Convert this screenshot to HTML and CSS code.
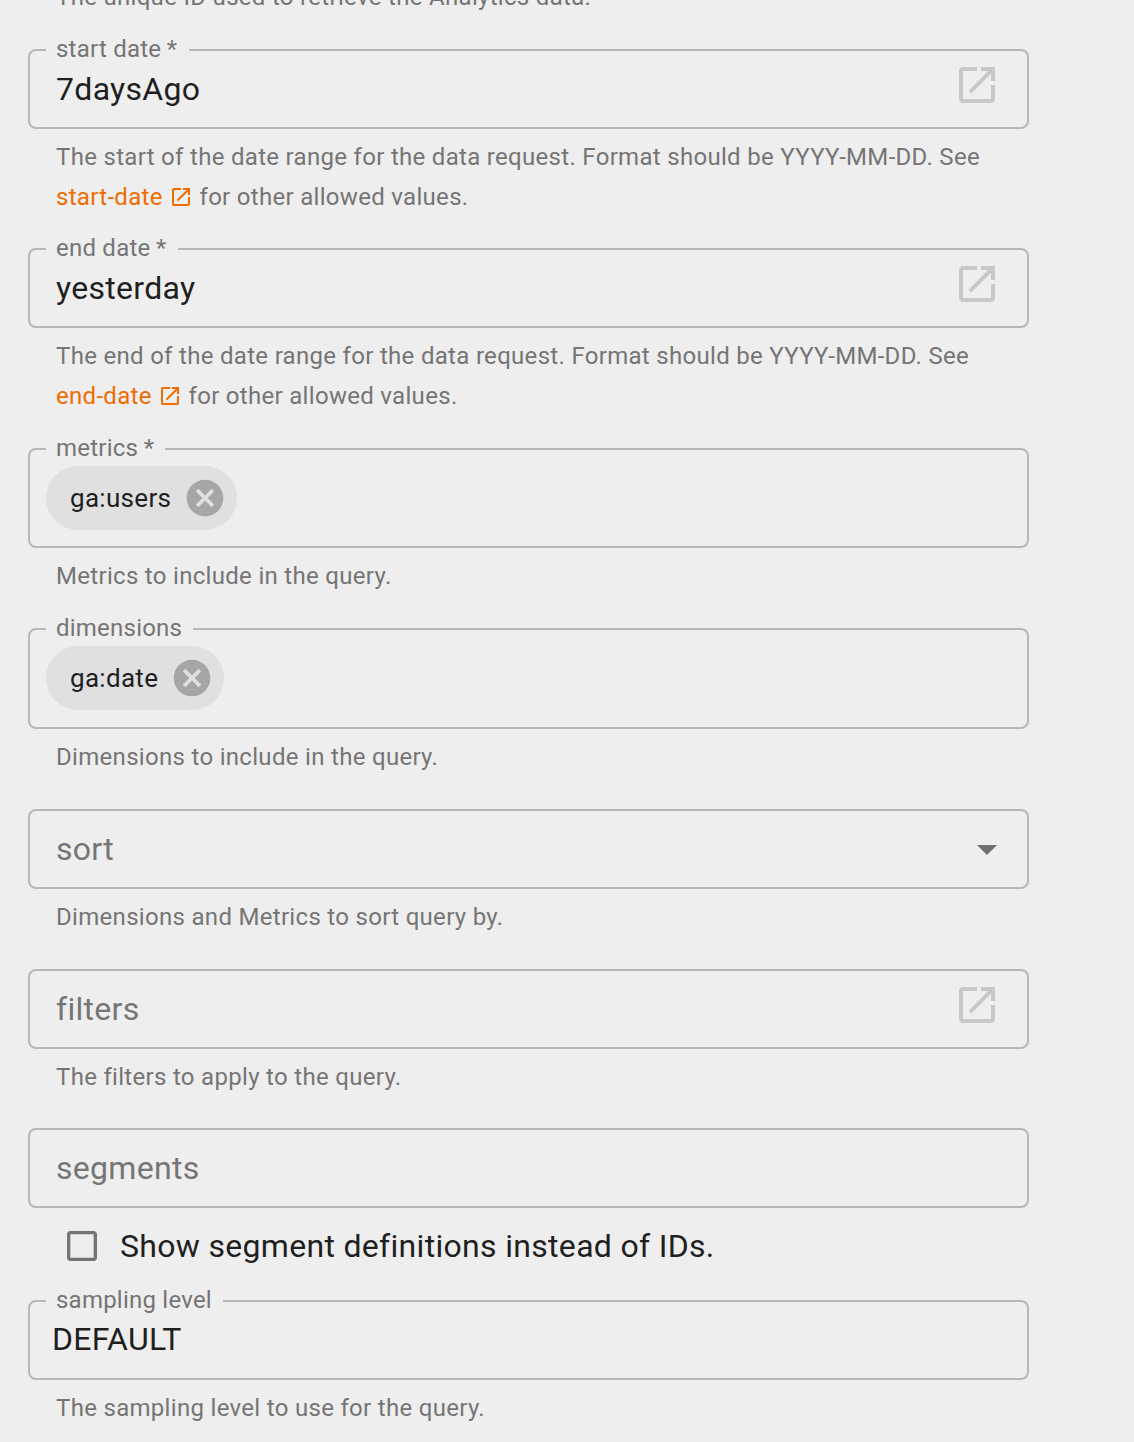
FILE: index.html
```html
<!DOCTYPE html>
<html lang="en">
<head>
<meta charset="utf-8">
<title>Query parameters</title>
<link rel="stylesheet" href="styles.css">
</head>
<body>
<svg class="sprite" aria-hidden="true">
  <symbol id="open" viewBox="0 0 24 24"><path d="M19 19H5V5h7V3H5c-1.11 0-2 .9-2 2v14c0 1.1.89 2 2 2h14c1.1 0 2-.9 2-2v-7h-2v7zM14 3v2h3.59l-9.83 9.83 1.41 1.41L19 6.41V10h2V3h-7z"/></symbol>
  <symbol id="cancel" viewBox="0 0 24 24"><path d="M12 2C6.47 2 2 6.47 2 12s4.47 10 10 10 10-4.47 10-10S17.53 2 12 2zm5 13.59L15.59 17 12 13.41 8.41 17 7 15.59 10.59 12 7 8.41 8.41 7 12 10.59 15.59 7 17 8.41 13.41 12 17 15.59z"/></symbol>
  <symbol id="arrow" viewBox="0 0 24 24"><path d="M7 10l5 5 5-5z"/></symbol>
  <symbol id="unchecked" viewBox="0 0 24 24"><path d="M19 5v14H5V5h14m0-2H5c-1.1 0-2 .9-2 2v14c0 1.1.9 2 2 2h14c1.1 0 2-.9 2-2V5c0-1.1-.9-2-2-2z"/></symbol>
</svg>
<main class="form">
  <section class="field">
    <p class="helper helper-first">The unique ID used to retrieve the Analytics data.</p>
  </section>
  <section class="field">
    <fieldset class="box">
      <legend class="label">start date<span class="star">*</span></legend>
      <div class="control"><span class="value">7daysAgo</span><svg class="open-icon"><use href="#open"/></svg></div>
    </fieldset>
    <p class="helper">The start of the date range for the data request. Format should be YYYY-MM-DD. See <a class="link">start-date<svg class="link-icon"><use href="#open"/></svg></a> for other allowed values.</p>
  </section>
  <section class="field">
    <fieldset class="box">
      <legend class="label">end date<span class="star">*</span></legend>
      <div class="control"><span class="value">yesterday</span><svg class="open-icon"><use href="#open"/></svg></div>
    </fieldset>
    <p class="helper">The end of the date range for the data request. Format should be YYYY-MM-DD. See <a class="link">end-date<svg class="link-icon"><use href="#open"/></svg></a> for other allowed values.</p>
  </section>
  <section class="field">
    <fieldset class="box box-metrics">
      <legend class="label">metrics<span class="star">*</span></legend>
      <div class="tags"><span class="chip">ga:users<svg class="chip-icon"><use href="#cancel"/></svg></span></div>
    </fieldset>
    <p class="helper">Metrics to include in the query.</p>
  </section>
  <section class="field">
    <fieldset class="box box-dimensions">
      <legend class="label">dimensions</legend>
      <div class="tags"><span class="chip">ga:date<svg class="chip-icon"><use href="#cancel"/></svg></span></div>
    </fieldset>
    <p class="helper">Dimensions to include in the query.</p>
  </section>
  <section class="field">
    <div class="box box-empty">
      <div class="control"><span class="placeholder">sort</span><svg class="arrow-icon"><use href="#arrow"/></svg></div>
    </div>
    <p class="helper">Dimensions and Metrics to sort query by.</p>
  </section>
  <section class="field">
    <div class="box box-empty">
      <div class="control"><span class="placeholder">filters</span><svg class="open-icon"><use href="#open"/></svg></div>
    </div>
    <p class="helper">The filters to apply to the query.</p>
  </section>
  <section class="field field-segments">
    <div class="box box-empty">
      <div class="control"><span class="placeholder">segments</span></div>
    </div>
    <label class="check"><svg class="check-icon"><use href="#unchecked"/></svg><span class="check-text">Show segment definitions instead of IDs.</span></label>
  </section>
  <section class="field">
    <fieldset class="box">
      <legend class="label">sampling level</legend>
      <div class="control control-select"><span class="select">DEFAULT</span></div>
    </fieldset>
    <p class="helper">The sampling level to use for the query.</p>
  </section>
</main>
</body>
</html>
```

FILE: styles.css
```css
* { box-sizing: border-box; }
html { overflow: hidden; height: 100%; }
body {
  margin: 0;
  height: 100%;
  overflow: hidden;
  background: #eeeeee;
  color: #1f1f1f;
  font-family: Roboto, "Liberation Sans", sans-serif;
  font-size: 32px;
  letter-spacing: 0.3px;
}
svg { display: block; flex: none; fill: currentColor; }
.sprite { display: none; }
.form {
  width: 1001px;
  margin: -23.14px 0 0 28px;
  display: flex;
  flex-direction: column;
  gap: 32px;
}
.field-segments { margin-bottom: -16px; }
.box {
  margin: 0;
  padding: 0;
  min-width: 0;
  height: 80px;
  border: 2px solid #b7b7b7;
  border-radius: 8px;
}
.box-metrics { height: 100.3px; }
.box-dimensions { height: 100.64px; }
.label {
  height: 2px;
  margin-left: 16px;
  padding: 0 11.2px 0 10px;
  color: #757575;
  font-size: 24px;
  line-height: 0;
  letter-spacing: 0.225px;
  white-space: nowrap;
}
.star { margin-left: 5.6px; }
.control {
  height: 76px;
  display: flex;
  align-items: center;
  justify-content: space-between;
  padding: 0 26px;
  line-height: 38px;
}
.placeholder { color: #757575; }
.open-icon { width: 48px; height: 48px; margin-bottom: 8px; color: #c8c8c8; }
.arrow-icon { width: 48px; height: 48px; margin-right: -10px; color: #707070; }
.control-select { padding: 0 22px 2px; }
.tags { display: flex; padding: 16px; }
.chip {
  display: flex;
  align-items: center;
  height: 64px;
  padding: 0 10px 0 24px;
  border-radius: 32px;
  background: #e0e0e0;
  font-size: 26px;
}
.chip-icon { width: 44px; height: 44px; margin-left: 12px; color: #a6a6a6; }
.helper {
  margin: 9px 28px -1px;
  color: #757575;
  font-size: 24px;
  line-height: 39.84px;
  letter-spacing: 0.305px;
}
.helper-first { margin-top: 1px; }
.link { color: #ef6c00; }
.link-icon { display: inline-block; width: 24px; height: 24px; margin: 0 0 0 6.5px; vertical-align: -4px; }
.check { display: flex; align-items: center; height: 76px; padding-left: 34px; gap: 18px; }
.check-icon { width: 40px; height: 40px; color: #757575; }
.check-text { padding-bottom: 1px; letter-spacing: 0.31px; }
```
